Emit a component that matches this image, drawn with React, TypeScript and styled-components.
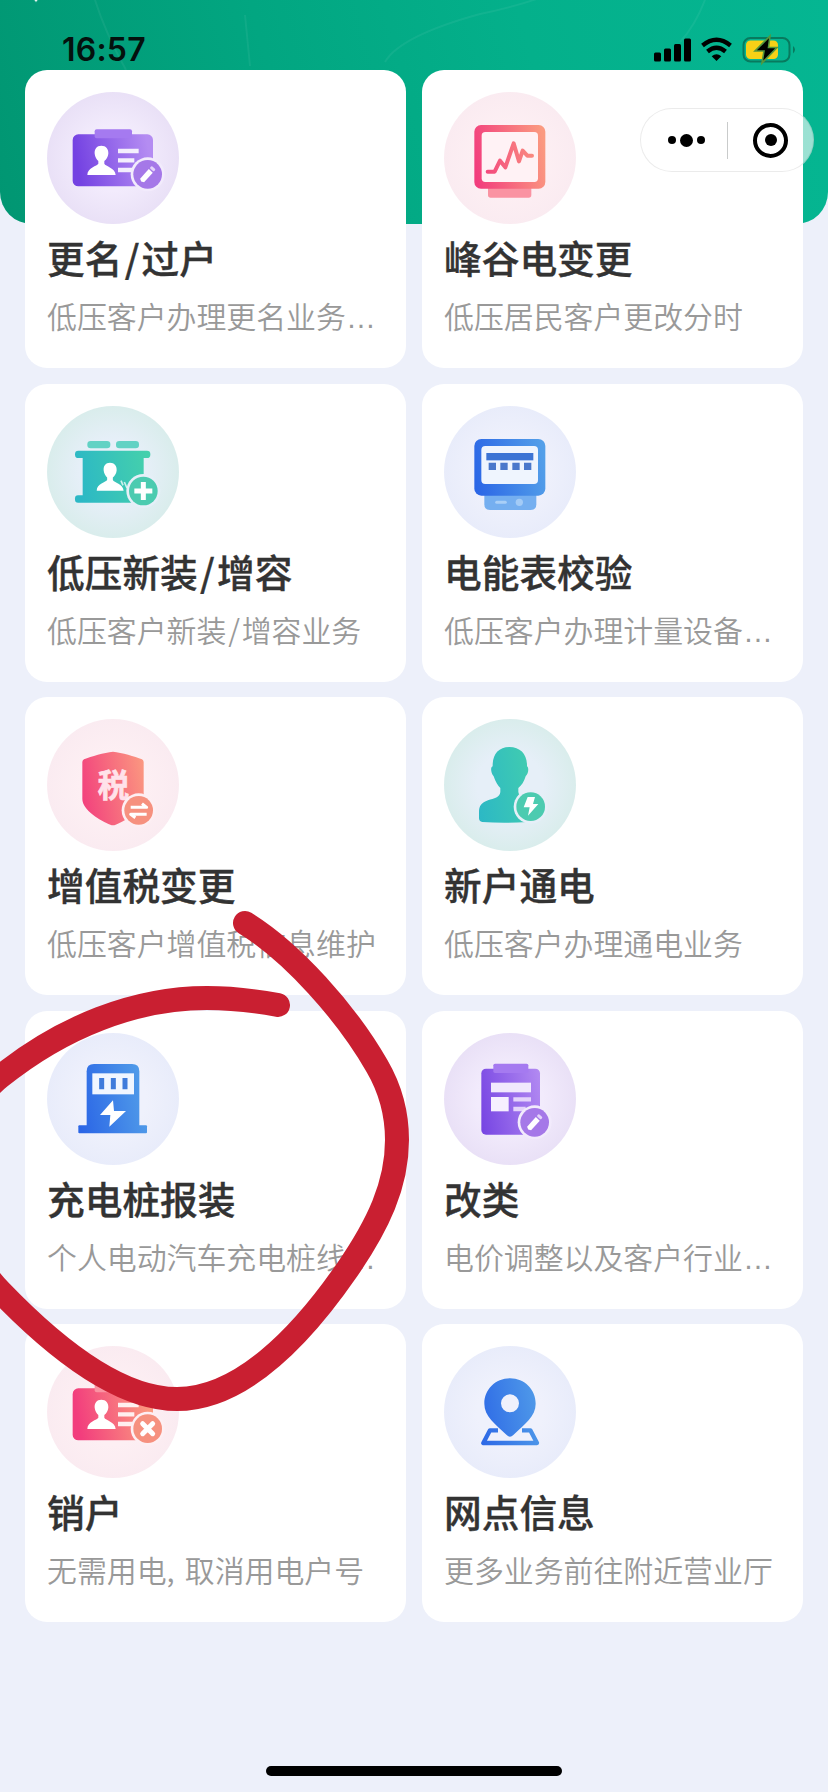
import React from "react";
import styled, { createGlobalStyle } from "styled-components";

const GlobalStyle = createGlobalStyle`
  * { box-sizing: border-box; }
  body { margin: 0; background: #edf0fa; }
`;

const Page = styled.main`
  position: relative;
  display: flex;
  flex-direction: column;
  width: 828px;
  height: 1792px;
  overflow: hidden;
  background: #edf0fa;
  font-family: "Noto Sans CJK SC", sans-serif;
`;

const Hero = styled.div`
  position: absolute;
  inset: 0 0 auto 0;
  height: 224px;
  border-radius: 0 0 32px 32px;
  overflow: hidden;
  background: linear-gradient(75deg, #019672 0%, #02a681 35%, #04b08b 65%, #05b692 100%);
`;

const StatusBar = styled.header`
  position: relative;
  flex: none;
  display: flex;
  justify-content: space-between;
  align-items: flex-start;
  height: 70px;
  padding: 30px 32px 0 62px;
`;

const Clock = styled.time`
  font: 600 32px/40px Inter, sans-serif;
  letter-spacing: 0.2px;
  color: #04110d;
`;

const StatusGlyphs = styled.svg`
  margin-top: 7px;
`;

const Grid = styled.section`
  position: relative;
  display: grid;
  grid-template-columns: repeat(2, 381px);
  grid-auto-rows: 298px;
  gap: 15.5px 16px;
  padding: 0 25px;
`;

const Card = styled.article`
  display: flex;
  flex-direction: column;
  align-items: flex-start;
  padding: 22px;
  border-radius: 22px;
  background: #fff;
`;

const Disc = styled.div<{ $inner: string; $outer: string }>`
  width: 132px;
  height: 132px;
  border-radius: 50%;
  background: radial-gradient(circle, ${(p) => p.$inner} 35%, ${(p) => p.$outer} 100%);
  svg { display: block; }
`;

const Title = styled.h2`
  margin: 6px 0 0;
  font-size: 37.7px;
  line-height: 54px;
  font-weight: 500;
  -webkit-text-stroke: 0.35px #333;
  white-space: nowrap;
  color: #333;
`;

const Desc = styled.p`
  margin: 9px 0 0;
  font-size: 29.9px;
  line-height: 44px;
  font-weight: 350;
  white-space: nowrap;
  word-spacing: 3.5px;
  color: #999;
`;

const Slash = styled.span`
  padding: 0 0.06em;
`;

const Dots = styled.span`
  font-family: "Liberation Sans", sans-serif;
`;

const Capsule = styled.nav`
  position: absolute;
  top: 108px;
  left: 640px;
  width: 174px;
  height: 64px;
  border-radius: 32px;
  border: 1px solid rgba(0, 0, 0, 0.08);
  background: rgba(255, 255, 255, 0.6);
  display: flex;
  align-items: center;
`;

const MoreButton = styled.span`
  display: flex;
  align-items: center;
  justify-content: center;
  gap: 4px;
  width: 87px;
  height: 37px;
  padding-left: 4px;
  border-right: 1px solid #c9cbcb;
`;

const Dot = styled.i<{ $size: number }>`
  width: ${(p) => p.$size}px;
  height: ${(p) => p.$size}px;
  border-radius: 50%;
  background: #000;
`;

const CloseButton = styled.span`
  display: grid;
  place-items: center;
  width: 35px;
  height: 35px;
  margin-left: 25px;
  border: 4px solid #000;
  border-radius: 50%;
`;

const Marker = styled.svg`
  position: absolute;
  inset: 0;
  pointer-events: none;
`;

const HomeIndicator = styled.div`
  width: 296px;
  height: 10px;
  margin: auto auto 16px;
  border-radius: 5px;
  background: #000;
`;

type Tone = "purple" | "pink" | "teal" | "blue";

const tones: Record<Tone, { inner: string; outer: string; from: string; to: string; soft: string; badge: string }> = {
  purple: { inner: "#f2ebfc", outer: "#e2d8f2", from: "#7442e2", to: "#b48cf2", soft: "#a57af0", badge: "#a578e8" },
  pink: { inner: "#fdeff3", outer: "#f8e8ef", from: "#f23d7d", to: "#fb9a80", soft: "#fa93a2", badge: "#f6917f" },
  teal: { inner: "#e6eff8", outer: "#cfebe2", from: "#2cb8c5", to: "#45d0ac", soft: "#62d2c4", badge: "#4ccbb0" },
  blue: { inner: "#eff1fc", outer: "#e3e8f9", from: "#2b66e6", to: "#539fe9", soft: "#75aff0", badge: "#539fe9" },
};

type IconName = "rename" | "peak" | "install" | "meter" | "tax" | "power" | "charger" | "category" | "cancel" | "location";

const Person = ({ x, y }: { x: number; y: number }) => (
  <path
    transform={`translate(${x} ${y})`}
    fill="#fff"
    d="M0-29C-14-29-21-19-20-5C-19 5-14 12-9 17V25C-12 32-42 36-42 59H43C42 37 12 33 9 25V17C15 12 20 5 21-5C22-19 14-29 0-29Z"
  />
);

const Badge = ({ x, y, tone, children }: { x: number; y: number; tone: Tone; children: React.ReactNode }) => (
  <g transform={`translate(${x} ${y})`}>
    <circle r="51" fill={tones[tone].inner} />
    <circle r="43" fill={tones[tone].badge} />
    {children}
  </g>
);

const Pencil = () => (
  <g transform="rotate(42)">
    <path fill="#fff" d="M-8-14H8V25L0 29L-8 25Z" />
    <rect x="-8" y="-27" width="16" height="9" rx="3" fill="#e4d3fa" />
  </g>
);

const IdCard = ({ fill, soft }: { fill: string; soft: string }) => (
  <>
    <rect x="77" y="127" width="241" height="156" rx="17" fill={fill} />
    <rect x="143" y="112" width="112" height="27" rx="6" fill={soft} />
    <Person x={163} y={190} />
    <path d="M213 177H275M213 205H262M213 234H255" stroke="#fff" strokeOpacity=".88" strokeWidth="13" />
  </>
);

const Glyph = ({ name, tone }: { name: IconName; tone: Tone }) => {
  const id = `grad-${name}`;
  const fill = `url(#${id})`;
  const { from, to, soft } = tones[tone];
  return (
    <svg width="132" height="132" viewBox="0 0 396 396" fill="none">
      <defs>
        <linearGradient id={id} gradientUnits="userSpaceOnUse" x1="90" y1="215" x2="305" y2="175">
          <stop offset="0" stopColor={from} />
          <stop offset="1" stopColor={to} />
        </linearGradient>
      </defs>
      {name === "rename" && (
        <>
          <IdCard fill={fill} soft={soft} />
          <Badge x={302} y={247} tone={tone}><Pencil /></Badge>
        </>
      )}
      {name === "cancel" && (
        <>
          <IdCard fill={fill} soft={soft} />
          <Badge x={302} y={248} tone={tone}>
            <path d="M-15-15L15 15M15-15L-15 15" stroke="#fff" strokeWidth="15" strokeLinecap="round" />
          </Badge>
        </>
      )}
      {name === "peak" && (
        <>
          <rect x="132" y="280" width="130" height="37" rx="8" fill={soft} />
          <rect x="91" y="99" width="213" height="191" rx="20" fill={fill} />
          <rect x="113" y="120" width="169" height="150" rx="11" fill="#fff2f5" />
          <path
            d="M131 239H152L168 206L184 226L209 154L225 208L236 176L250 191H264"
            stroke={fill} strokeWidth="12" strokeLinejoin="round" strokeLinecap="round"
          />
        </>
      )}
      {name === "install" && (
        <>
          <rect x="121" y="105" width="69" height="22" rx="10" fill={soft} />
          <rect x="207" y="105" width="69" height="22" rx="10" fill={soft} />
          <rect x="84" y="134" width="226" height="22" rx="10" fill={fill} />
          <rect x="107" y="136" width="183" height="152" fill={fill} />
          <rect x="84" y="268" width="200" height="22" rx="9" fill={fill} />
          <g transform="translate(189 198) scale(.95)"><Person x={0} y={0} /></g>
          <path d="M222 224L228 238M232 228L240 246" stroke="#fff" strokeOpacity=".75" strokeWidth="5" />
          <Badge x={289} y={255} tone={tone}>
            <path d="M0-27V27M-27 0H27" stroke="#fff" strokeWidth="15" />
          </Badge>
        </>
      )}
      {name === "meter" && (
        <>
          <path d="M121 262H277V295Q277 312 260 312H138Q121 312 121 295Z" fill={soft} />
          <rect x="91" y="99" width="213" height="170" rx="21" fill={fill} />
          <rect x="112" y="120" width="170" height="114" rx="12" fill="#eff5fe" />
          <rect x="127" y="141" width="141" height="22" fill="#3c74d4" />
          <path d="M134 181H156M169 181H191M205 181H227M240 181H262" stroke="#4a78cb" strokeWidth="22" />
          <path d="M158 289H184" stroke="#a9cff7" strokeWidth="9" strokeLinecap="round" />
          <circle cx="226" cy="289" r="11" fill="#a3cbf6" />
        </>
      )}
      {name === "tax" && (
        <>
          <path d="M198 98C225 101 263 112 285 121Q290 124 290 129V240C290 274 233 307 206 317Q198 320 190 317C163 307 106 274 106 240V129Q106 124 111 121C133 112 171 101 198 98Z" fill={fill} />
          <text x="199" y="233" textAnchor="middle" fontFamily="Noto Sans CJK SC, sans-serif" fontWeight="700" fontSize="94" fill="#ffe2ea" stroke="#ffe2ea" strokeWidth="2">税</text>
          <Badge x={275} y={274} tone={tone}>
            <path d="M-24-9H24L10-20M24 12H-24L-10 22" stroke="#fff" strokeWidth="9" strokeLinejoin="round" />
          </Badge>
        </>
      )}
      {name === "power" && (
        <>
          <path d="M196 84C163 84 145 107 146 142C139 144 140 160 149 172C154 188 162 201 169 207V219C168 235 150 238 132 244C112 251 105 261 105 280V298Q105 307 115 309Q180 314 250 309L272 250C256 247 224 235 223 219V207C233 200 240 188 245 172C254 162 255 146 249 142C250 107 230 84 196 84Z" fill={fill} />
          <Badge x={260} y={263} tone={tone}>
            <path d="M-9-29H13L7-8H23L-8 27L-3 2H-21Z" fill="#fff" />
          </Badge>
        </>
      )}
      {name === "charger" && (
        <>
          <path d="M119 280V115Q119 93 141 93H255Q277 93 277 115V280Z" fill={fill} />
          <rect x="94" y="277" width="206" height="24" rx="3" fill={fill} />
          <rect x="136" y="121" width="125" height="63" fill="#f1f6ff" />
          <path d="M164 135V169M199 135V169M234 135V169" stroke="#3f7bdb" strokeWidth="15" />
          <path d="M198 202L159 246H190L187 281L237 234H201Z" fill="#fff" />
        </>
      )}
      {name === "category" && (
        <>
          <rect x="112" y="107" width="176" height="198" rx="14" fill={fill} />
          <rect x="148" y="92" width="105" height="28" rx="5" fill={soft} />
          <rect x="141" y="149" width="120" height="29" fill="#f1e9fd" />
          <rect x="141" y="192" width="53" height="43" fill="#f6f0ff" />
          <path d="M208 199H261M208 228H245" stroke="#e4d3fb" strokeWidth="13" />
          <Badge x={272} y={268} tone={tone}><Pencil /></Badge>
        </>
      )}
      {name === "location" && (
        <>
          <path d="M162 253H138L118 291H279L259 253H234" stroke={fill} strokeWidth="13" strokeLinejoin="round" />
          <path
            fillRule="evenodd" fill={fill}
            d="M198 97C154 97 121 131 121 173C121 211 153 233 188 267Q198 277 208 267C243 233 275 211 275 173C275 131 242 97 198 97ZM198 145A27 27 0 1 1 198 199A27 27 0 1 1 198 145Z"
          />
        </>
      )}
    </svg>
  );
};

interface Service {
  icon: IconName;
  tone: Tone;
  title: string;
  desc: string;
  cut?: boolean;
}

const services: Service[] = [
  { icon: "rename", tone: "purple", title: "更名/过户", desc: "低压客户办理更名业务", cut: true },
  { icon: "peak", tone: "pink", title: "峰谷电变更", desc: "低压居民客户更改分时" },
  { icon: "install", tone: "teal", title: "低压新装/增容", desc: "低压客户新装/增容业务" },
  { icon: "meter", tone: "blue", title: "电能表校验", desc: "低压客户办理计量设备", cut: true },
  { icon: "tax", tone: "pink", title: "增值税变更", desc: "低压客户增值税信息维护" },
  { icon: "power", tone: "teal", title: "新户通电", desc: "低压客户办理通电业务" },
  { icon: "charger", tone: "blue", title: "充电桩报装", desc: "个人电动汽车充电桩线", cut: true },
  { icon: "category", tone: "purple", title: "改类", desc: "电价调整以及客户行业", cut: true },
  { icon: "cancel", tone: "pink", title: "销户", desc: "无需用电, 取消用电户号" },
  { icon: "location", tone: "blue", title: "网点信息", desc: "更多业务前往附近营业厅" },
];

/* Gives the slash between two terms a little air on both sides. */
const Spaced = ({ text }: { text: string }) => {
  const [head, tail] = text.split("/");
  return tail === undefined ? <>{head}</> : <>{head}<Slash>/</Slash>{tail}</>;
};

const StatusIcons = () => (
  <StatusGlyphs width="142" height="26" viewBox="0 0 142 26" fill="none" overflow="visible">
    <g fill="#000">
      <rect x="0" y="15.5" width="7" height="9" rx="1.5" />
      <rect x="10" y="11.5" width="7" height="13" rx="1.5" />
      <rect x="20" y="7" width="7" height="17.5" rx="1.5" />
      <rect x="30" y="1.5" width="7" height="23" rx="1.5" />
      <path d="M62.5 24L57.7 19.2Q62.5 15.2 67.3 19.2Z" />
    </g>
    <path d="M48.5 8.5Q62.5-3 76.5 8.5" stroke="#000" strokeWidth="4.3" />
    <path d="M53.5 14.5Q62.5 7 71.5 14.5" stroke="#000" strokeWidth="4.3" />
    <rect x="89.5" y="1" width="46" height="23.5" rx="7" stroke="#087a5e" strokeWidth="2" />
    <path d="M139 9Q143 12.5 139 16.5Z" fill="#087a5e" />
    <rect x="92" y="3.5" width="32" height="18.5" rx="4.5" fill="#f7d117" />
    <path d="M116-1L101 14H110L108 26L123 10.5H114.5Z" fill="#000" stroke="#55973c" strokeWidth="1.6" />
  </StatusGlyphs>
);

/* The hand-drawn loop around the charging-pile card. */
const loop = [
  "M245 923",
  "C292 952 346 1012 377 1066",
  "C391 1090 397 1115 397 1140",
  "C397 1185 378 1225 347 1270",
  "C300 1338 240 1399 177 1399",
  "C118 1399 52 1345 0 1291",
  "C-60 1229 -60 1125 0 1077",
  "C62 1027 135 998 207 998",
  "C232 998 256 1001 278 1005",
].join("");

export default function App() {
  return (
    <Page>
      <GlobalStyle />
      <Hero>
        <svg width="828" height="224" fill="none" stroke="#fff" strokeOpacity=".06" strokeWidth="2">
          <path d="M95 0Q105 32 126 70M245 15L250 66M385 62Q400 36 480 14Q540 2 580-20M705 0Q695 26 680 42" />
          <path d="M32-3L36 2L40-3Z" fill="#fff" fillOpacity=".9" />
        </svg>
      </Hero>
      <StatusBar>
        <Clock>16:57</Clock>
        <StatusIcons />
      </StatusBar>
      <Grid>
        {services.map((s) => (
          <Card key={s.icon}>
            <Disc $inner={tones[s.tone].inner} $outer={tones[s.tone].outer}>
              <Glyph name={s.icon} tone={s.tone} />
            </Disc>
            <Title><Spaced text={s.title} /></Title>
            <Desc>
              <Spaced text={s.desc} />
              {s.cut && <Dots>…</Dots>}
            </Desc>
          </Card>
        ))}
      </Grid>
      <HomeIndicator />
      <Capsule>
        <MoreButton>
          <Dot $size={8} />
          <Dot $size={13} />
          <Dot $size={8} />
        </MoreButton>
        <CloseButton>
          <Dot $size={12} />
        </CloseButton>
      </Capsule>
      <Marker width="828" height="1792" fill="none">
        <path d={loop} stroke="#c91f31" strokeWidth="24" strokeLinecap="round" strokeLinejoin="round" />
      </Marker>
    </Page>
  );
}
